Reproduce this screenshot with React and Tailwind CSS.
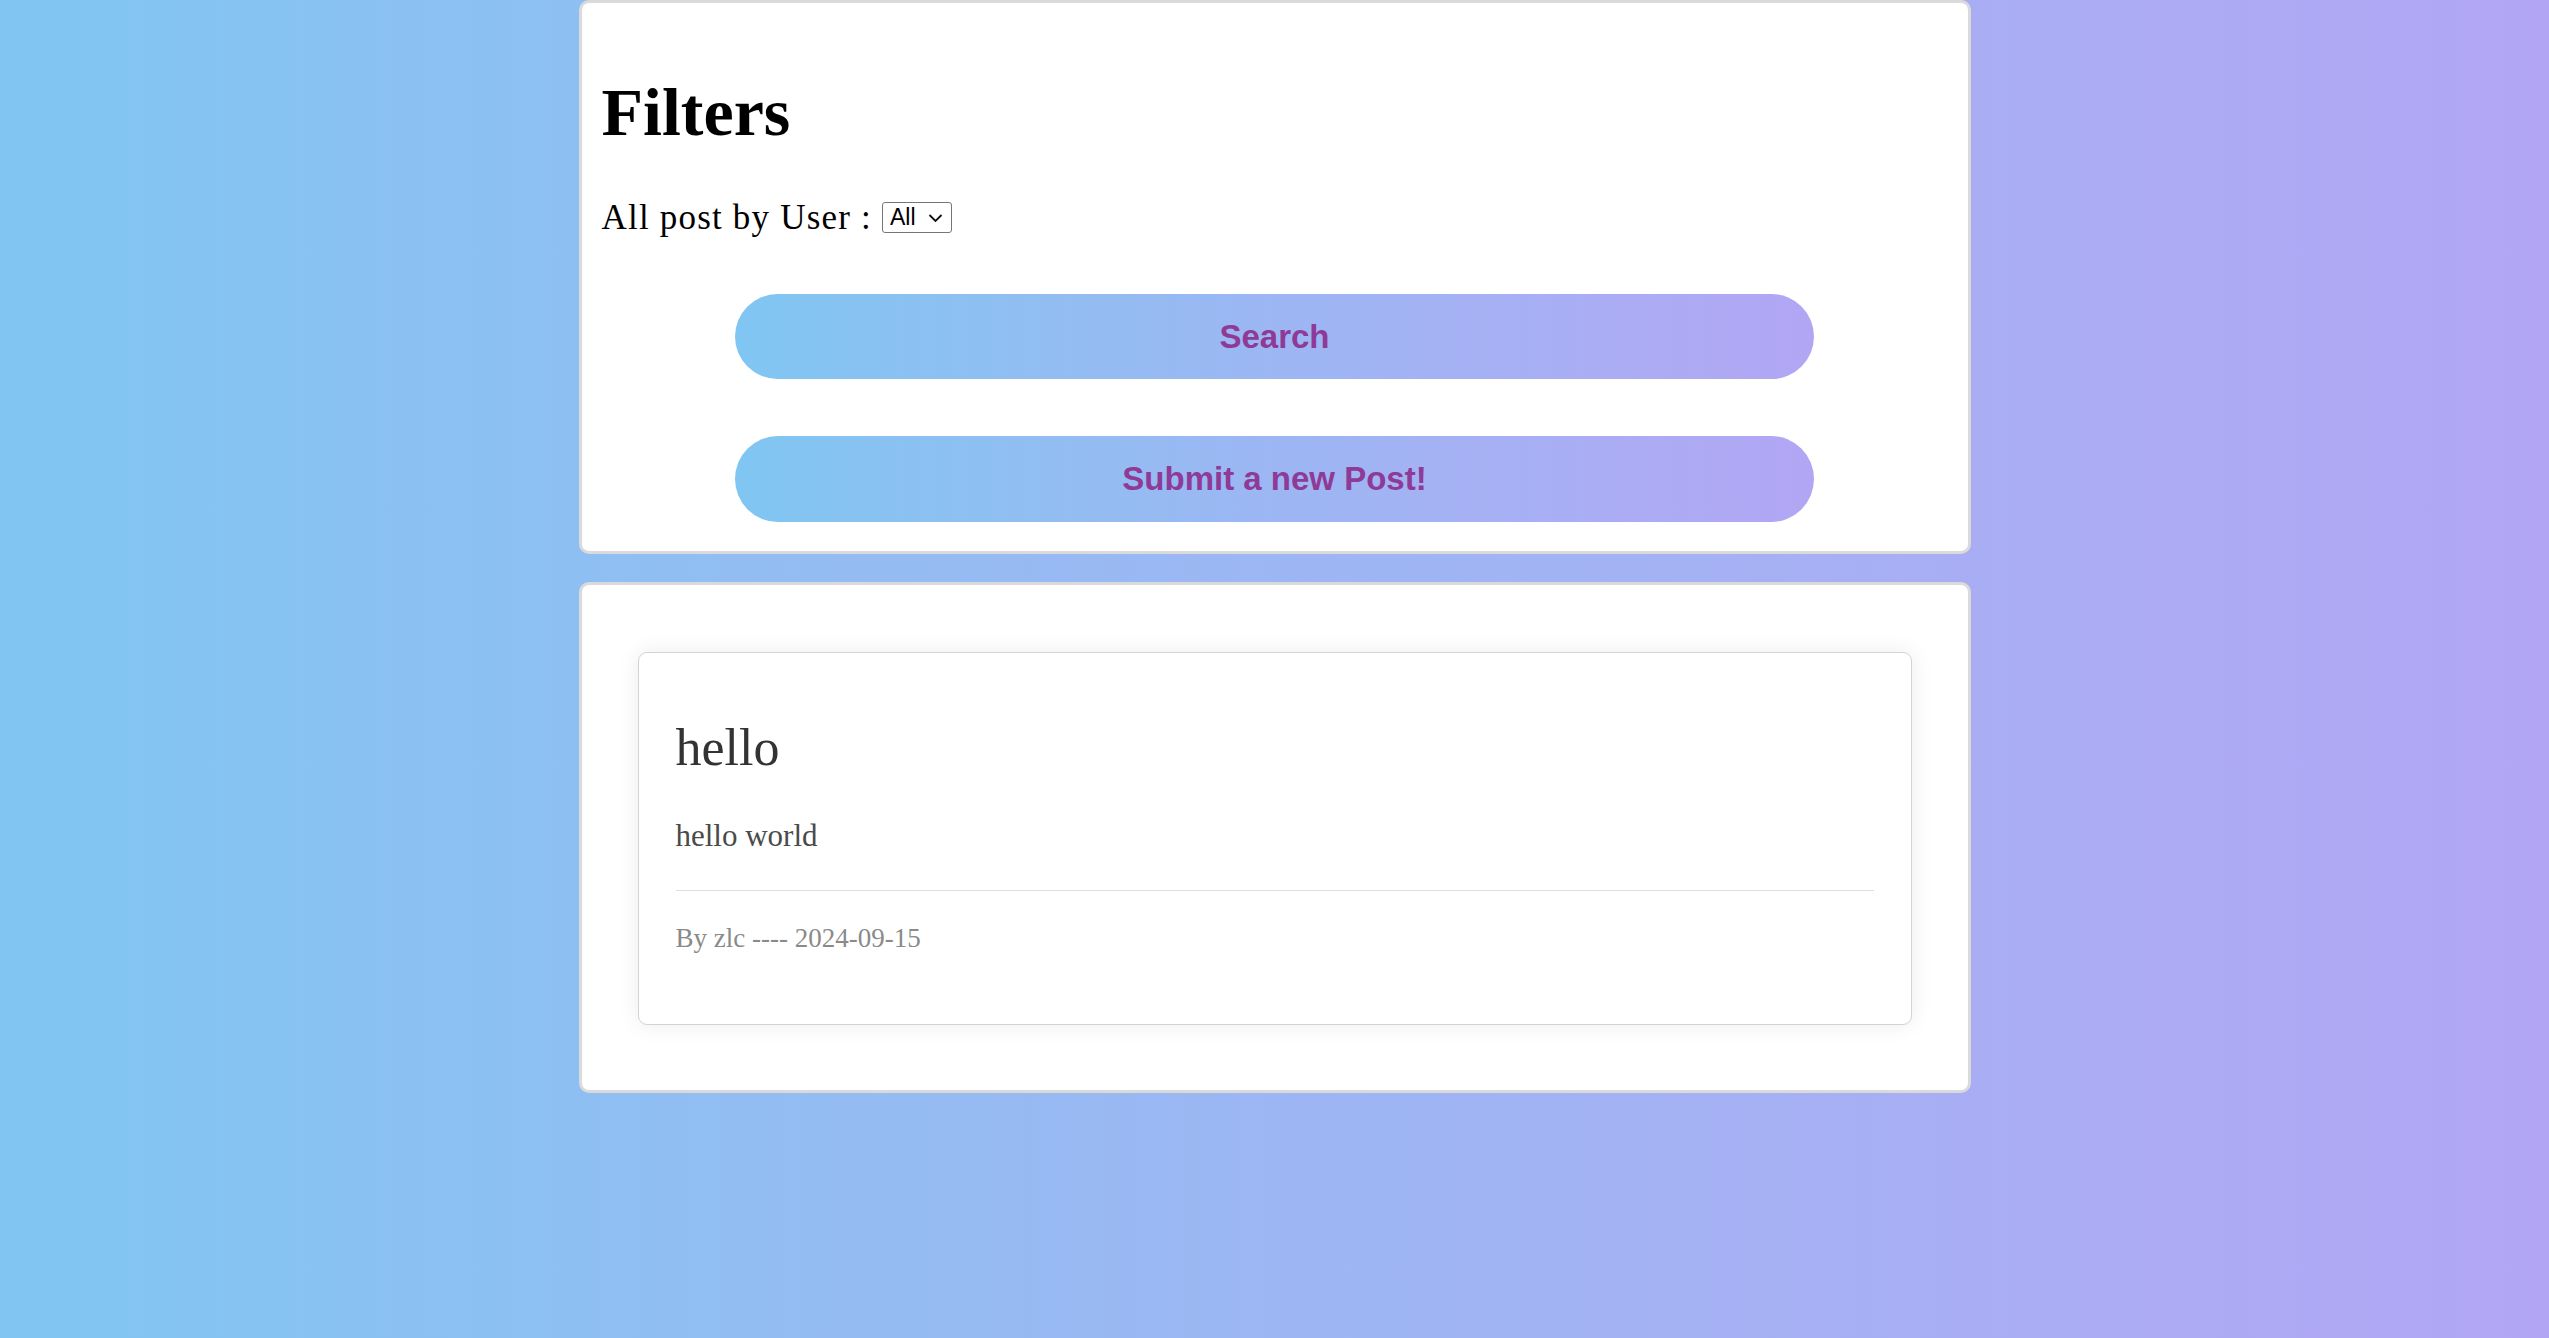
import { useState } from 'react';

const serif = { fontFamily: '"Liberation Serif", "Times New Roman", serif' };
const sans = { fontFamily: '"Liberation Sans", Arial, sans-serif' };

const posts = [
  { id: 1, title: 'hello', content: 'hello world', author: 'zlc', date: '2024-09-15' },
];

function GradientButton({ children, className = '' }) {
  return (
    <button
      style={sans}
      className={`mx-auto flex w-[1079px] items-center justify-center rounded-full bg-linear-to-r from-[#80c6f2] to-[#b2a6f4] text-[33px] font-bold text-[#8e3a96] ${className}`}
    >
      {children}
    </button>
  );
}

function PostCard({ post }) {
  return (
    <div className="rounded-[9px] border border-[#d3d3d3] bg-white px-[37px] pb-[72px] pt-[69px] shadow-[0_0_22px_rgba(0,0,0,0.08)]">
      <h2 className="text-[52px] leading-none text-[#333]">{post.title}</h2>
      <p className="mt-[46px] text-[31px] leading-none text-[#4a4a4a]">{post.content}</p>
      <div className="mt-[39px] border-t border-[#dedede]" />
      <p className="mt-[34px] text-[27px] leading-none text-[#8a8a8a]">
        By {post.author} ---- {post.date}
      </p>
    </div>
  );
}

export default function App() {
  const [user, setUser] = useState('All');

  return (
    <div style={serif} className="min-h-[2600px] w-screen bg-linear-to-r from-[#80c6f2] to-[#b2a6f4]">
      {/* Filters */}
      <div className="mx-auto w-[1392px] rounded-[10px] border-[3px] border-[#dadada] bg-white px-5 pb-[29px] pt-[75px]">
        <h1 className="text-[68px] font-bold leading-none text-black">Filters</h1>
        <div className="mt-[56px] flex h-[30px] items-center">
          <span className="text-[35px] leading-none tracking-[1.2px] text-black">All post by User :</span>
          <span className="relative ml-[10px] inline-flex">
            <select
              value={user}
              onChange={(e) => setUser(e.target.value)}
              style={sans}
              className="h-[31px] w-[70px] appearance-none rounded-[3px] border border-[#767676] bg-white py-0 pl-[7px] text-[23px] leading-[29px] text-black"
            >
              <option>All</option>
              <option>zlc</option>
            </select>
            <svg
              className="pointer-events-none absolute right-[9px] top-[11px] h-[10px] w-[15px]"
              viewBox="0 0 15 10"
              fill="none"
              stroke="#111"
              strokeWidth="1.8"
            >
              <path d="M1.5 2 L7.5 8 L13.5 2" />
            </svg>
          </span>
        </div>
        <GradientButton className="mt-[62px] h-[85px]">Search</GradientButton>
        <GradientButton className="mt-[57px] h-[86px]">Submit a new Post!</GradientButton>
      </div>

      {/* Posts */}
      <div className="mx-auto mt-[28px] w-[1392px] rounded-[10px] border-[3px] border-[#dadada] bg-white px-[56px] pb-[65px] pt-[67px]">
        {posts.map((p) => (
          <PostCard key={p.id} post={p} />
        ))}
      </div>
    </div>
  );
}
